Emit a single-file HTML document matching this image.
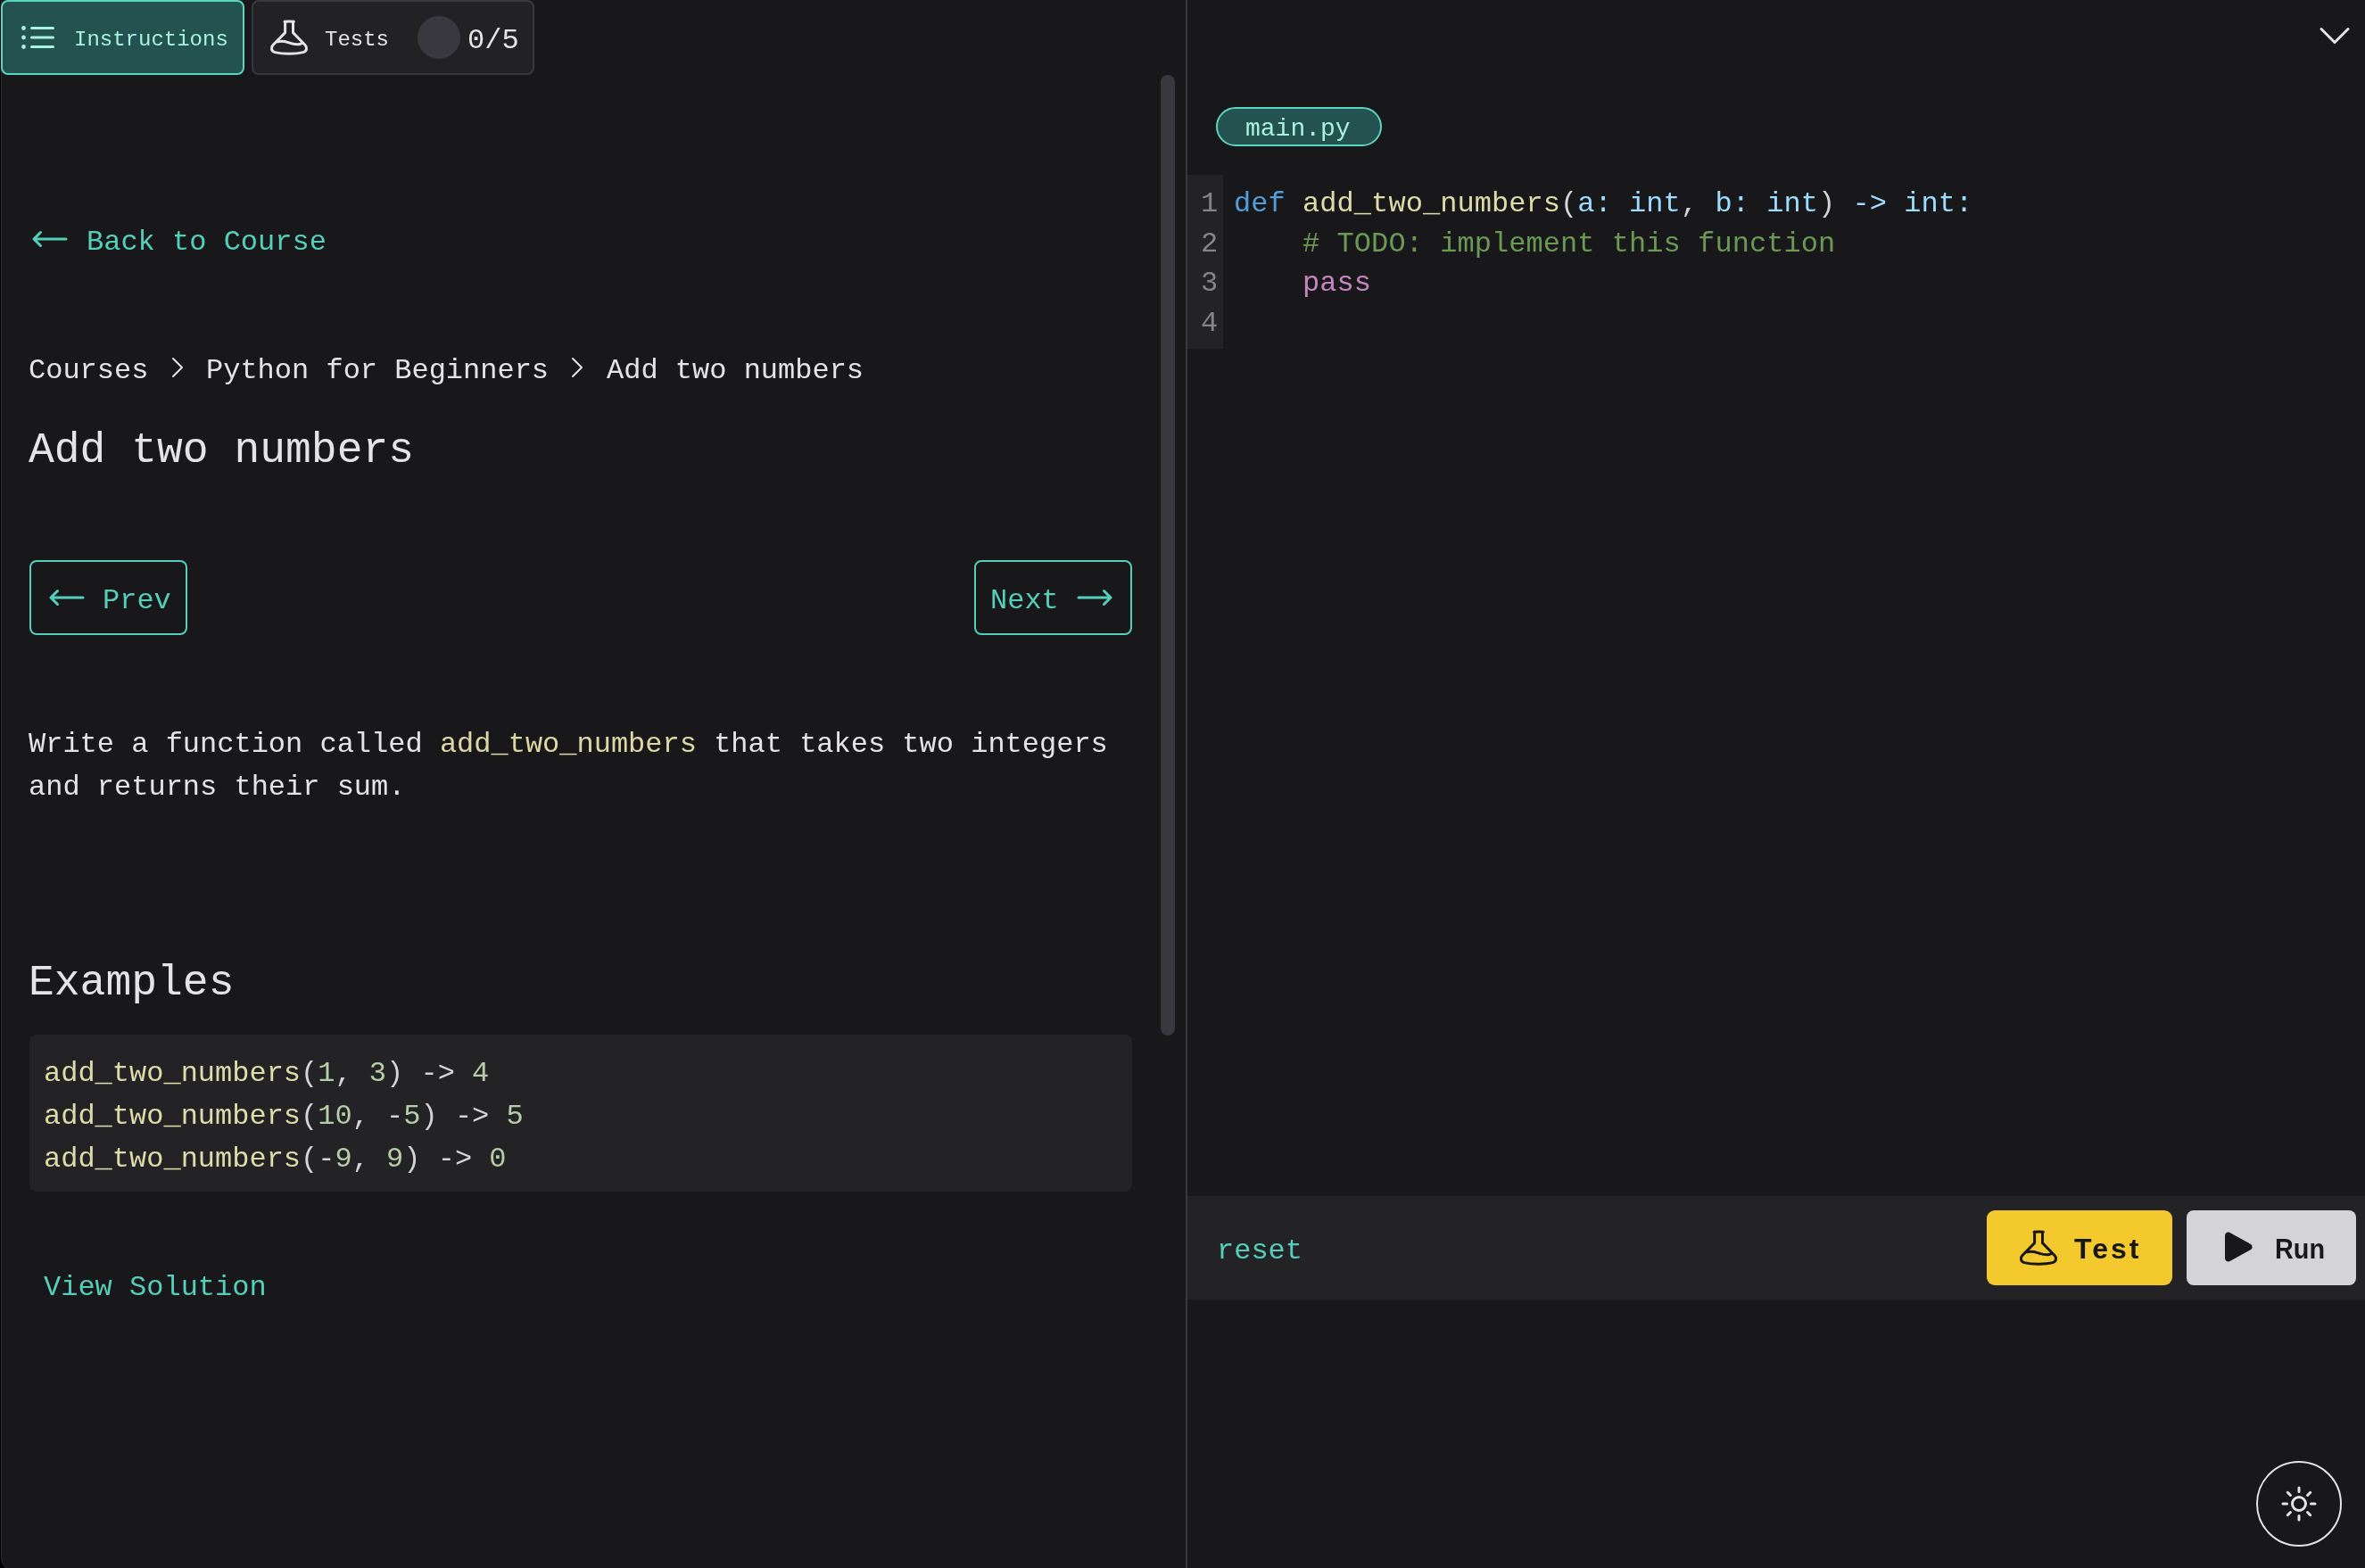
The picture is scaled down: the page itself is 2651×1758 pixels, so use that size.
<!DOCTYPE html>
<html>
<head>
<meta charset="utf-8">
<style>
html,body{margin:0;padding:0;}
body{will-change:transform;width:2651px;height:1758px;background:#18181b;position:relative;overflow:hidden;font-family:"Liberation Mono",monospace;color:#e4e4e7;}
.a{position:absolute;white-space:pre;}
.m32{font-size:32px;line-height:32px;}
.m24{font-size:24px;line-height:24px;}
.m48{font-size:48px;line-height:48px;}
.teal{color:#55cfb9;}
svg{position:absolute;overflow:visible;}
.box{position:absolute;box-sizing:border-box;}
</style>
</head>
<body>
<!-- left window edge -->
<div class="box" style="left:0;top:0;width:1px;height:1746px;background:#000;"></div>
<div class="box" style="left:1px;top:0;width:1px;height:1746px;background:#2c2c30;"></div>

<svg style="left:0;top:1720px" width="30" height="38" viewBox="0 0 30 38"><path d="M0 0 H1 V26 A16.3 16.3 0 0 0 17.3 42.3 H0 Z" fill="#000"/><path d="M1.5 0 V26 A15.8 15.8 0 0 0 17.3 41.8" fill="none" stroke="#2c2c30" stroke-width="1"/></svg>
<!-- Tabs -->
<div class="box" style="left:1px;top:0;width:273px;height:84px;border:2px solid #5ad5bf;border-radius:8px;background:#245250;"></div>
<svg style="left:19px;top:18px" width="48" height="48" viewBox="0 0 24 24" fill="none" stroke="#a8f2e0" stroke-width="1.5" stroke-linecap="round" stroke-linejoin="round"><path d="M8.25 6.75h12M8.25 12h12m-12 5.25h12"/><circle cx="3.75" cy="6.75" r="0.45" fill="#a8f2e0"/><circle cx="3.75" cy="12" r="0.45" fill="#a8f2e0"/><circle cx="3.75" cy="17.25" r="0.45" fill="#a8f2e0"/></svg>
<div class="a m24" style="left:83px;top:33px;color:#a8f2e0;">Instructions</div>

<div class="box" style="left:282px;top:0;width:317px;height:84px;border:2px solid #38383e;border-radius:8px;background:#222225;"></div>
<svg style="left:300px;top:18px" width="48" height="48" viewBox="0 0 48 48" fill="none" stroke="#e4e4e7" stroke-width="3" stroke-linecap="round" stroke-linejoin="round"><path d="M19.1 6.3 Q24.2 5.6 29.3 6.3"/><path d="M19.6 6.3 V18.6 L6.2 32.3 C3.5 35 3.8 39.6 8 40.6 C13 41.8 18.5 42.2 24 42.2 C29.5 42.2 35 41.8 40 40.6 C44.2 39.6 44.5 35 41.8 32.3 L28.5 18.6 V6.3"/><path d="M11 28.8 C15 27.8 19 28.2 23 29.6 C27 31 31 32 34 31.8 C35.8 31.7 37 31.2 38.5 30.6"/></svg>
<div class="a m24" style="left:364px;top:33px;">Tests</div>
<div class="box" style="left:468px;top:18px;width:48px;height:48px;border-radius:50%;background:#38383e;"></div>
<div class="a m32" style="left:524px;top:30px;">0/5</div>

<!-- scrollbar + divider -->
<div class="box" style="left:1301px;top:84px;width:16px;height:1077px;border-radius:8px;background:#38383e;"></div>
<div class="box" style="left:1329px;top:0;width:2px;height:1758px;background:#38383e;"></div>

<!-- Back to course -->
<svg style="left:32px;top:244px" width="48" height="48" viewBox="0 0 24 24" fill="none" stroke="#55cfb9" stroke-width="1.5" stroke-linecap="round" stroke-linejoin="round"><path d="M6.75 15.75 3 12m0 0 3.75-3.75M3 12h18"/></svg>
<div class="a m32 teal" style="left:97px;top:256px;">Back to Course</div>

<!-- breadcrumb -->
<div class="a m32" style="left:32px;top:400px;">Courses</div>
<svg style="left:183px;top:396px" width="32" height="32" viewBox="0 0 24 24" fill="none" stroke="#e4e4e7" stroke-width="1.5" stroke-linecap="round" stroke-linejoin="round"><path d="m8.25 4.5 7.5 7.5-7.5 7.5"/></svg>
<div class="a m32" style="left:231px;top:400px;">Python for Beginners</div>
<svg style="left:631px;top:396px" width="32" height="32" viewBox="0 0 24 24" fill="none" stroke="#e4e4e7" stroke-width="1.5" stroke-linecap="round" stroke-linejoin="round"><path d="m8.25 4.5 7.5 7.5-7.5 7.5"/></svg>
<div class="a m32" style="left:680px;top:400px;">Add two numbers</div>

<!-- title -->
<div class="a m48" style="left:32px;top:481px;">Add two numbers</div>

<!-- prev/next -->
<div class="box" style="left:33px;top:628px;width:177px;height:84px;border:2px solid #55cfb9;border-radius:8px;"></div>
<svg style="left:51px;top:646px" width="48" height="48" viewBox="0 0 24 24" fill="none" stroke="#55cfb9" stroke-width="1.5" stroke-linecap="round" stroke-linejoin="round"><path d="M6.75 15.75 3 12m0 0 3.75-3.75M3 12h18"/></svg>
<div class="a m32 teal" style="left:115px;top:658px;">Prev</div>

<div class="box" style="left:1092px;top:628px;width:177px;height:84px;border:2px solid #55cfb9;border-radius:8px;"></div>
<div class="a m32 teal" style="left:1110px;top:658px;">Next</div>
<svg style="left:1203px;top:646px" width="48" height="48" viewBox="0 0 24 24" fill="none" stroke="#55cfb9" stroke-width="1.5" stroke-linecap="round" stroke-linejoin="round"><path d="M17.25 8.25 21 12m0 0-3.75 3.75M21 12H3"/></svg>

<!-- paragraph -->
<div class="a" style="left:32px;top:811px;font-size:32px;line-height:48px;">Write a function called <span style="color:#dcd8a4">add_two_numbers</span> that takes two integers
and returns their sum.</div>

<!-- Examples -->
<div class="a m48" style="left:32px;top:1078px;">Examples</div>
<div class="box" style="left:33px;top:1160px;width:1236px;height:176px;border-radius:8px;background:#232326;"></div>
<div class="a" style="left:49px;top:1180px;font-size:32px;line-height:48px;color:#d4d4d4;"><span style="color:#dcdcaa">add_two_numbers</span>(<span style="color:#b5cea8">1</span>, <span style="color:#b5cea8">3</span>) -&gt; <span style="color:#b5cea8">4</span>
<span style="color:#dcdcaa">add_two_numbers</span>(<span style="color:#b5cea8">10</span>, -<span style="color:#b5cea8">5</span>) -&gt; <span style="color:#b5cea8">5</span>
<span style="color:#dcdcaa">add_two_numbers</span>(-<span style="color:#b5cea8">9</span>, <span style="color:#b5cea8">9</span>) -&gt; <span style="color:#b5cea8">0</span></div>

<div class="a m32 teal" style="left:49px;top:1428px;">View Solution</div>

<!-- RIGHT PANEL -->
<svg style="left:2593px;top:16px" width="48" height="48" viewBox="0 0 24 24" fill="none" stroke="#e4e4e7" stroke-width="1.5" stroke-linecap="round" stroke-linejoin="round"><path d="m19.5 8.25-7.5 7.5-7.5-7.5"/></svg>

<div class="box" style="left:1363px;top:120px;width:186px;height:44px;border:2px solid #5ad5bf;border-radius:22px;background:#245250;"></div>
<div class="a" style="left:1396px;top:131px;font-size:28px;line-height:28px;color:#a8f2e0;">main.py</div>

<!-- gutter -->
<div class="box" style="left:1331px;top:196px;width:40px;height:195px;background:#232326;"></div>
<div class="a" style="left:1346px;top:207px;font-size:32px;line-height:44.7px;color:#858585;">1
2
3
4</div>
<div class="a" style="left:1383px;top:207px;font-size:32px;line-height:44.7px;letter-spacing:0.06px;color:#d4d4d4;"><span style="color:#569cd6">def</span> <span style="color:#dcdcaa">add_two_numbers</span>(<span style="color:#9cdcfe">a: int</span>, <span style="color:#9cdcfe">b: int</span>) <span style="color:#9cdcfe">-&gt; int:</span>
    <span style="color:#6a9955"># TODO: implement this function</span>
    <span style="color:#c586c0">pass</span>
</div>

<!-- bottom bar -->
<div class="box" style="left:1331px;top:1341px;width:1320px;height:116px;background:#232326;"></div>
<div class="a m32 teal" style="left:1364px;top:1387px;">reset</div>

<div class="box" style="left:2227px;top:1357px;width:208px;height:84px;border-radius:9px;background:#f4c92d;"></div>
<svg style="left:2261px;top:1375px" width="48" height="48" viewBox="0 0 48 48" fill="none" stroke="#18181b" stroke-width="3" stroke-linecap="round" stroke-linejoin="round"><path d="M19.1 6.3 Q24.2 5.6 29.3 6.3"/><path d="M19.6 6.3 V18.6 L6.2 32.3 C3.5 35 3.8 39.6 8 40.6 C13 41.8 18.5 42.2 24 42.2 C29.5 42.2 35 41.8 40 40.6 C44.2 39.6 44.5 35 41.8 32.3 L28.5 18.6 V6.3"/><path d="M11 28.8 C15 27.8 19 28.2 23 29.6 C27 31 31 32 34 31.8 C35.8 31.7 37 31.2 38.5 30.6"/></svg>
<div class="a" style="left:2325px;top:1384px;font-family:'Liberation Sans',sans-serif;font-weight:bold;font-size:32px;line-height:32px;color:#18181b;letter-spacing:3px;">Test</div>

<div class="box" style="left:2451px;top:1357px;width:190px;height:84px;border-radius:8px;background:#d4d4d8;"></div>
<svg style="left:2485px;top:1374px" width="48" height="48" viewBox="0 0 24 24" fill="#18181b"><path d="M4.5 5.653c0-1.427 1.529-2.33 2.779-1.643l11.54 6.347c1.295.712 1.295 2.573 0 3.286L7.28 19.99c-1.25.687-2.779-.217-2.779-1.643V5.653Z"/></svg>
<div class="a" style="left:2550px;top:1384px;font-family:'Liberation Sans',sans-serif;font-weight:bold;font-size:32px;line-height:32px;color:#18181b;transform:scaleX(0.9);transform-origin:0 0;">Run</div>

<!-- theme toggle -->
<div class="box" style="left:2529px;top:1638px;width:96px;height:96px;border:2px solid #e4e4e7;border-radius:50%;"></div>
<svg style="left:2553px;top:1662px" width="48" height="48" viewBox="0 0 24 24" fill="none" stroke="#e4e4e7" stroke-width="1.5" stroke-linecap="round" stroke-linejoin="round"><path d="M12 3v2.25m6.364.386-1.591 1.591M21 12h-2.25m-.386 6.364-1.591-1.591M12 18.75V21m-4.773-4.227-1.591 1.591M5.25 12H3m4.227-4.773L5.636 5.636M15.75 12a3.75 3.75 0 1 1-7.5 0 3.75 3.75 0 0 1 7.5 0Z"/></svg>
</body>
</html>
